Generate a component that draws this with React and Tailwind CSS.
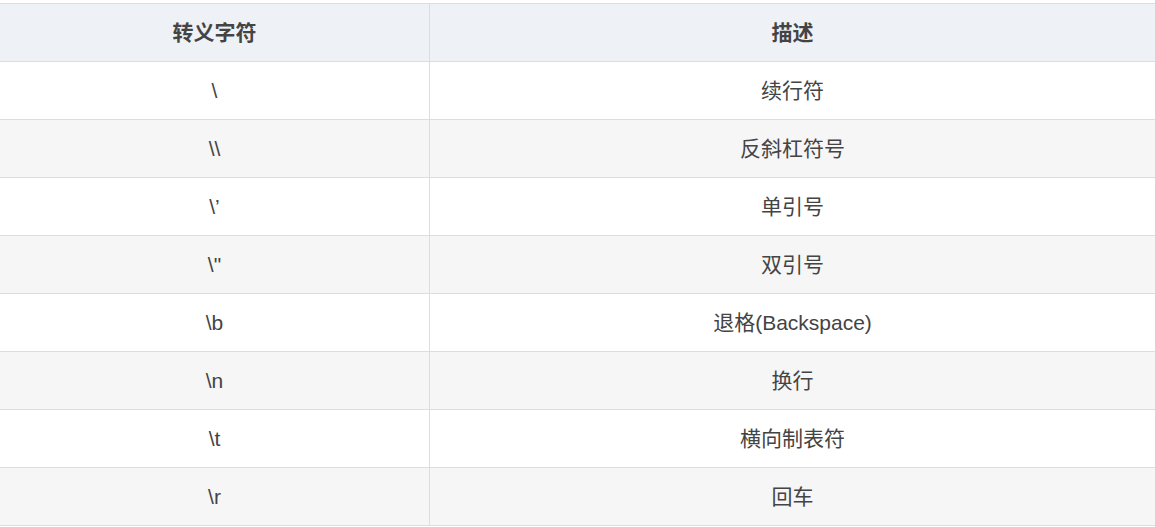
import React from 'react';

const rows = [
    ['\\', '续行符'],
    ['\\\\', '反斜杠符号'],
    ['\\’', '单引号'],
    ['\\"', '双引号'],
    ['\\b', '退格(Backspace)'],
    ['\\n', '换行'],
    ['\\t', '横向制表符'],
    ['\\r', '回车'],
];

const App = () => {
    return (
        <div className="bg-white pt-[3px] w-[1155px] h-[527px] overflow-hidden text-[21px] text-[#444] font-['Liberation_Sans','Noto_Sans_CJK_SC',sans-serif]">
            <div className="border-t border-[#ddd]">
                {/* Header */}
                <div className="grid grid-cols-[430px_1fr] bg-[#eef1f5] border-b border-[#ddd] font-bold text-[#444]">
                    <div className="h-[57px] flex items-center justify-center border-r border-[#ddd]">转义字符</div>
                    <div className="h-[57px] flex items-center justify-center">描述</div>
                </div>

                {rows.map(([code, desc], i) => (
                    <div
                        key={i}
                        className={`grid grid-cols-[430px_1fr] border-b border-[#ddd] ${i % 2 === 1 ? 'bg-[#f6f6f6]' : 'bg-white'}`}
                    >
                        <div className="h-[57px] flex items-center justify-center border-r border-[#ddd]">{code}</div>
                        <div className="h-[57px] flex items-center justify-center">{desc}</div>
                    </div>
                ))}
            </div>
        </div>
    );
};

export default App;
